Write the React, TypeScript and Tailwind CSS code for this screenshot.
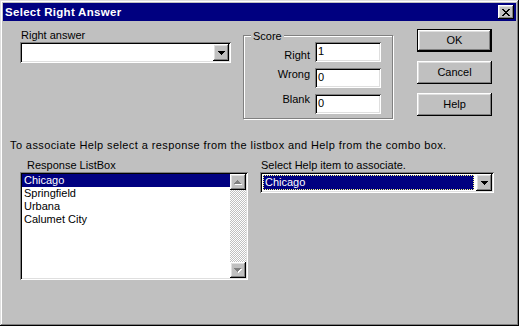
import React from "react";

const raised =
  "shadow-[inset_-1px_-1px_#000,inset_1px_1px_#fff,inset_-2px_-2px_#808080,inset_2px_2px_#dfdfdf]";
const sunken =
  "shadow-[inset_1px_1px_#808080,inset_-1px_-1px_#fff,inset_2px_2px_#000,inset_-2px_-2px_#dfdfdf]";

const DownArrow = ({ color = "#000" }: { color?: string }) => (
  <svg width="7" height="4" viewBox="0 0 7 4" shapeRendering="crispEdges">
    <rect x="0" y="0" width="7" height="1" fill={color} />
    <rect x="1" y="1" width="5" height="1" fill={color} />
    <rect x="2" y="2" width="3" height="1" fill={color} />
    <rect x="3" y="3" width="1" height="1" fill={color} />
  </svg>
);

// greyed-out arrow with the white emboss under it
const DisabledArrow = ({ up }: { up?: boolean }) => {
  const rows = up
    ? [
        [3, 0, 1],
        [2, 1, 3],
        [1, 2, 5],
        [0, 3, 7],
      ]
    : [
        [0, 0, 7],
        [1, 1, 5],
        [2, 2, 3],
        [3, 3, 1],
      ];
  return (
    <svg width="8" height="5" viewBox="0 0 8 5" shapeRendering="crispEdges">
      {rows.map(([x, y, w]) => (
        <rect key={"w" + y} x={x + 1} y={y + 1} width={w} height="1" fill="#fff" />
      ))}
      {rows.map(([x, y, w]) => (
        <rect key={"g" + y} x={x} y={y} width={w} height="1" fill="#808080" />
      ))}
    </svg>
  );
};

const CloseGlyph = () => (
  <svg width="8" height="7" viewBox="0 0 8 7" shapeRendering="crispEdges">
    <path
      d="M0 0h2v1h-2zM6 0h2v1h-2zM1 1h2v1h-2zM5 1h2v1h-2zM2 2h4v1h-4zM3 3h2v1h-2zM2 4h4v1h-4zM1 5h2v1h-2zM5 5h2v1h-2zM0 6h2v1h-2zM6 6h2v1h-2z"
      fill="#000"
    />
  </svg>
);

const DropButton = () => (
  <div className={`w-[16px] h-[17px] bg-[#c0c0c0] flex items-center justify-center ${raised}`}>
    <DownArrow />
  </div>
);

const Button = ({ label, isDefault }: { label: string; isDefault?: boolean }) => (
  <div
    className={`w-[75px] h-[23px] bg-[#c0c0c0] flex items-center justify-center ${raised} ${
      isDefault ? "border border-black" : ""
    }`}
  >
    {label}
  </div>
);

const Field = ({ value }: { value: string }) => (
  <div className={`w-[66px] h-[20px] bg-white pl-[3px] pt-[3px] ${sunken}`}>{value}</div>
);

const scoreRows = [
  { label: "Right", value: "1", offset: "mt-[7px]" },
  { label: "Wrong", value: "0", offset: "mt-0" },
  { label: "Blank", value: "0", offset: "-mt-px" },
];

const responses = ["Chicago", "Springfield", "Urbana", "Calumet City"];

export default function App() {
  return (
    <div
      className={`w-[519px] h-[326px] bg-[#c0c0c0] p-[3px] flex flex-col font-['Liberation_Sans',Arial,sans-serif] text-[11px] leading-[13px] text-black shadow-[inset_-1px_-1px_#000,inset_1px_1px_#dfdfdf,inset_-2px_-2px_#808080,inset_2px_2px_#fff]`}
    >
      <div className="h-[18px] bg-[#000080] flex items-center justify-between pl-[2px] pr-[2px]">
        <span className="text-white font-bold text-[11.5px] tracking-[0.3px]">Select Right Answer</span>
        <div className={`w-[16px] h-[14px] bg-[#c0c0c0] flex items-center justify-center ${raised}`}>
          <CloseGlyph />
        </div>
      </div>

      <div className="flex-1 flex flex-col pt-[8px]">
        <div className="flex items-start pl-[17px]">
          <div className="w-[211px] flex flex-col">
            <span className="pl-[1px]">Right answer</span>
            <div className={`h-[21px] bg-white p-[2px] flex justify-end ${sunken}`}>
              <DropButton />
            </div>
          </div>

          <div className="ml-[12px] mt-[6px] w-[150px] h-[84px] relative border border-[#808080] shadow-[inset_1px_1px_#fff,1px_1px_#fff]">
            <span className="absolute left-[7px] top-[-6px] px-[2px] bg-[#c0c0c0]">Score</span>
            <div className="pt-[6px] flex flex-col gap-[6px]">
              {scoreRows.map((r) => (
                <div key={r.label} className="flex items-start">
                  <span className={`w-[66px] text-right ${r.offset}`}>{r.label}</span>
                  <div className="ml-[5px]">
                    <Field value={r.value} />
                  </div>
                </div>
              ))}
            </div>
          </div>

          <div className="ml-[24px] flex flex-col gap-[9px]">
            <Button label="OK" isDefault />
            <Button label="Cancel" />
            <Button label="Help" />
          </div>
        </div>

        <p className="mt-[20px] pl-[7px] tracking-[0.4px] whitespace-nowrap">
          To associate Help select a response from the listbox and Help from the combo box.
        </p>

        <div className="mt-[7px] flex items-start pl-[17px]">
          <div className="w-[228px] flex flex-col">
            <span className="pl-[7px]">Response ListBox</span>
            <div className={`h-[108px] bg-white p-[2px] flex ${sunken}`}>
              <div className="flex-1 flex flex-col">
                {responses.map((r, i) => (
                  <div
                    key={r}
                    className={`h-[13px] pl-[2px] ${i === 0 ? "bg-[#000080] text-white" : ""}`}
                  >
                    {r}
                  </div>
                ))}
              </div>
              <div className="w-[16px] flex flex-col">
                <div className={`h-[16px] bg-[#c0c0c0] flex items-center justify-center ${raised}`}>
                  <DisabledArrow up />
                </div>
                <div className="flex-1 bg-[image:repeating-conic-gradient(#c0c0c0_0_25%,#fff_0_50%)] bg-[length:2px_2px]" />
                <div className={`h-[16px] bg-[#c0c0c0] flex items-center justify-center ${raised}`}>
                  <DisabledArrow />
                </div>
              </div>
            </div>
          </div>

          <div className="ml-[12px] w-[234px] flex flex-col">
            <span className="pl-[1px]">Select Help item to associate.</span>
            <div className={`h-[21px] bg-white p-[2px] flex ${sunken}`}>
              <div className="flex-1 pl-[1px] py-[1px] pr-[2px]">
                <div className="h-full bg-[#000080] text-white border border-dotted border-[#ffff80] pl-px">
                  Chicago
                </div>
              </div>
              <DropButton />
            </div>
          </div>
        </div>
      </div>
    </div>
  );
}
